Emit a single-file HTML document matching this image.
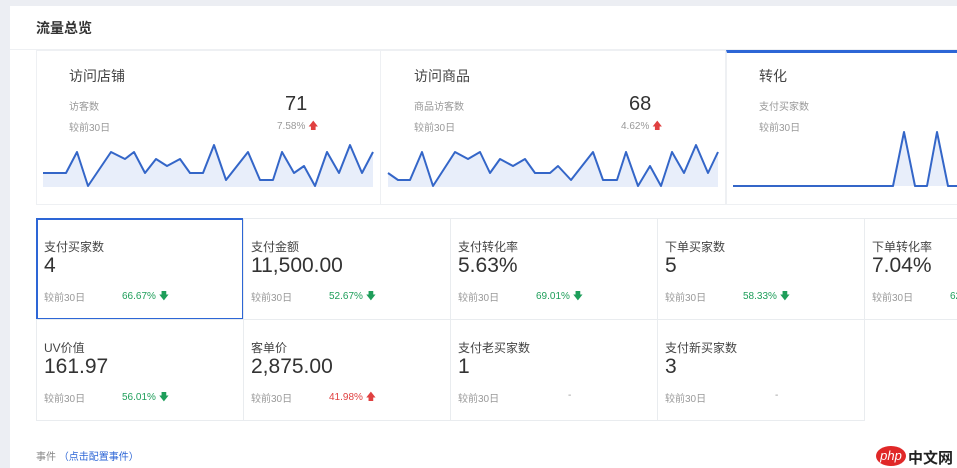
<!DOCTYPE html>
<html><head><meta charset="utf-8"><style>
*{margin:0;padding:0;box-sizing:border-box}
body{width:957px;height:468px;overflow:hidden;background:#eceef3;font-family:"Liberation Sans","Noto Sans CJK SC",sans-serif;position:relative;color:#333}
.panel{position:absolute;left:10px;top:6px;width:947px;height:462px;background:#fff}
.a{position:absolute;white-space:nowrap}
.hdr{left:36px;top:18px;font-size:14px;font-weight:bold;color:#333}
.sep{left:10px;top:49px;width:947px;height:1px;background:#eef0f3}
.card{position:absolute;top:50px;height:155px;border:1px solid #eef0f3;background:#fff}
.t1{font-size:14px;color:#444}
.s{font-size:10px;color:#999}
.big{font-size:20px;color:#333}
.cell{position:absolute;width:208px;height:102px;border:1px solid #e9ecef}
.cell .n{position:absolute;left:7px;top:19px;font-size:12px;color:#444}
.cell .v{position:absolute;left:7px;top:35px;font-size:21px;color:#333}
.cell .c{position:absolute;left:7px;top:70px;font-size:10px;color:#999}
.cell .p{position:absolute;left:85px;top:70px;font-size:10px}
.g{color:#1e9e5a}.r{color:#e04040}
</style></head><body>
<div class="panel"></div>
<div class="a hdr">流量总览</div>
<div class="a sep"></div>
<div class="card" style="left:36px;width:345px"></div>
<div class="card" style="left:380px;width:346px"></div>
<div class="card" style="left:726px;width:240px;border-top:3px solid #2d66d6"></div>
<div class="a t1" style="left:69px;top:66px">访问店铺</div>
<div class="a s" style="left:69px;top:98px">访客数</div>
<div class="a s" style="left:69px;top:119px">较前30日</div>
<div class="a big" style="left:285px;top:93px">71</div>
<div class="a s" style="left:277px;top:119px">7.58% <span class="r">🡅</span></div>
<div class="a t1" style="left:414px;top:66px">访问商品</div>
<div class="a s" style="left:414px;top:98px">商品访客数</div>
<div class="a s" style="left:414px;top:119px">较前30日</div>
<div class="a big" style="left:629px;top:93px">68</div>
<div class="a s" style="left:621px;top:119px">4.62% <span class="r">🡅</span></div>
<div class="a t1" style="left:759px;top:66px">转化</div>
<div class="a s" style="left:759px;top:98px">支付买家数</div>
<div class="a s" style="left:759px;top:119px">较前30日</div>
<svg class="a" style="left:0;top:0" width="957" height="210">
<g fill="#e8eefa" stroke="none">
<polygon points="43,187 43,173 66,173 77,152 88,186 111,152 125,159 134,152 145,173 156,159 167,166 180,159 190,173 203,173 214,145 226,180 248,152 260,180 273,180 282,152 294,173 304,166 315,186 327,152 339,173 350,145 362,173 373,152 373,187"/>
<polygon points="388,187 388,173 398,180 410,180 422,152 433,186 455,152 468,159 480,152 490,173 500,159 513,166 525,159 535,173 550,173 558,166 571,180 593,152 603,180 617,180 626,152 638,186 650,166 661,186 672,152 684,173 696,145 708,173 718,152 718,187"/>
<polygon points="893,186 904,132 915,186 927,186 937,132 948,186"/>
</g>
<g fill="none" stroke="#3466c8" stroke-width="2" stroke-linejoin="round">
<polyline points="43,173 66,173 77,152 88,186 111,152 125,159 134,152 145,173 156,159 167,166 180,159 190,173 203,173 214,145 226,180 248,152 260,180 273,180 282,152 294,173 304,166 315,186 327,152 339,173 350,145 362,173 373,152"/>
<polyline points="388,173 398,180 410,180 422,152 433,186 455,152 468,159 480,152 490,173 500,159 513,166 525,159 535,173 550,173 558,166 571,180 593,152 603,180 617,180 626,152 638,186 650,166 661,186 672,152 684,173 696,145 708,173 718,152"/>
<polyline points="733,186 893,186 904,132 915,186 927,186 937,132 948,186 957,186"/>
</g>
</svg>
<div class="cell" style="left:36px;top:218px;border:2px solid #2d66d6"><div class="n" style="left:6px;top:18px">支付买家数</div><div class="v" style="left:6px;top:34px">4</div><div class="c" style="left:6px;top:69px">较前30日</div><div class="p g" style="left:84px;top:69px">66.67% 🡇</div></div>
<div class="cell" style="left:243px;top:218px"><div class="n">支付金额</div><div class="v">11,500.00</div><div class="c">较前30日</div><div class="p g">52.67% 🡇</div></div>
<div class="cell" style="left:450px;top:218px"><div class="n">支付转化率</div><div class="v">5.63%</div><div class="c">较前30日</div><div class="p g">69.01% 🡇</div></div>
<div class="cell" style="left:657px;top:218px"><div class="n">下单买家数</div><div class="v">5</div><div class="c">较前30日</div><div class="p g">58.33% 🡇</div></div>
<div class="cell" style="left:864px;top:218px"><div class="n">下单转化率</div><div class="v">7.04%</div><div class="c">较前30日</div><div class="p g">62.50% 🡇</div></div>
<div class="cell" style="left:36px;top:319px"><div class="n">UV价值</div><div class="v">161.97</div><div class="c">较前30日</div><div class="p g">56.01% 🡇</div></div>
<div class="cell" style="left:243px;top:319px"><div class="n">客单价</div><div class="v">2,875.00</div><div class="c">较前30日</div><div class="p r">41.98% 🡅</div></div>
<div class="cell" style="left:450px;top:319px"><div class="n">支付老买家数</div><div class="v">1</div><div class="c">较前30日</div><div class="p" style="left:117px;color:#999">-</div></div>
<div class="cell" style="left:657px;top:319px"><div class="n">支付新买家数</div><div class="v">3</div><div class="c">较前30日</div><div class="p" style="left:117px;color:#999">-</div></div>
<div class="a s" style="left:36px;top:448px;color:#888">事件 <span style="color:#2d66d6">（点击配置事件）</span></div>
<div class="a" style="left:876px;top:446px;width:30px;height:20px;border-radius:50%;background:#e02828;color:#fff;font-size:13px;text-align:center;line-height:19px;font-style:italic">php</div>
<div class="a" style="left:908px;top:447px;font-size:15px;color:#222;font-weight:bold">中文网</div>
</body></html>
